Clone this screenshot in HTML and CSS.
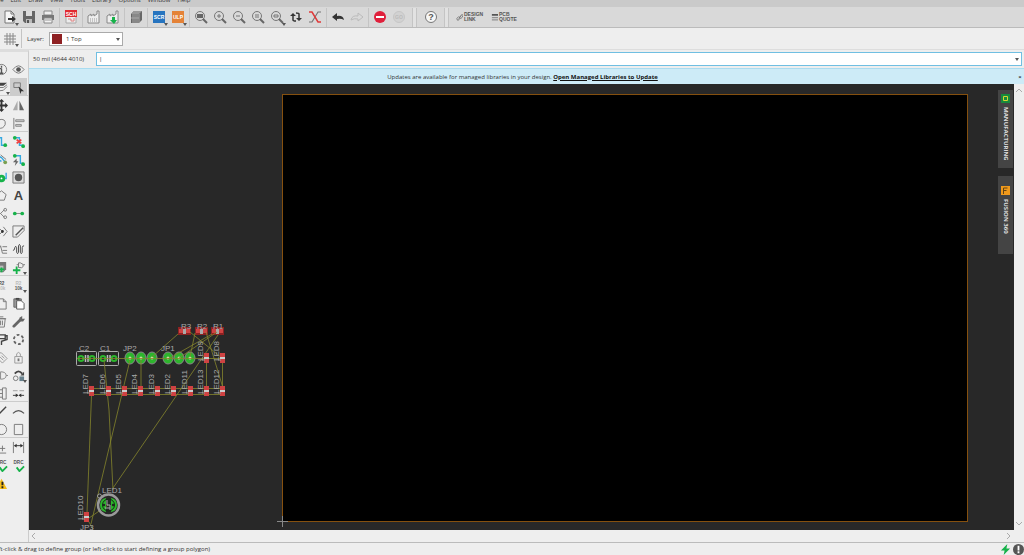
FILE: index.html
```html
<!DOCTYPE html>
<html lang="en">
<head>
    <meta charset="UTF-8">
    <meta name="viewport" content="width=device-width, initial-scale=1.0">
    <title>Board Editor</title>
    <link rel="stylesheet" href="styles.css">
</head>
<body>
    <nav class="menubar">
        <a href="#">File</a>
        <a href="#">Edit</a>
        <a href="#">Draw</a>
        <a href="#">View</a>
        <a href="#">Tools</a>
        <a href="#">Library</a>
        <a href="#">Options</a>
        <a href="#">Window</a>
        <a href="#">Help</a>
    </nav>

    <div class="toolbar">
        <button class="tool more" aria-label="New"><svg viewBox="0 0 14 14"><path d="M2 1h6l3 3v9H2z" fill="#f6f6f6" stroke="#777"/><path d="M8 1v3h3" fill="none" stroke="#777"/><path d="M5 8h4V6l4 3-4 3v-2H5z" fill="#333"/></svg></button>
        <button class="tool" aria-label="Save"><svg viewBox="0 0 14 14"><path d="M1 1h12v12H3l-2-2z" fill="#666"/><path d="M4 1h6v5H4z" fill="#ddd"/><path d="M4 9h6v4H4z" fill="#bbb"/><path d="M5 10h2v3H5z" fill="#555"/></svg></button>
        <button class="tool" aria-label="Print"><svg viewBox="0 0 14 14"><path d="M3 1h8v4H3z" fill="#eee" stroke="#888"/><path d="M1 5h12v5H1z" fill="#777"/><path d="M3 8h8v5H3z" fill="#f2f2f2" stroke="#888"/><path d="M4 10h6" stroke="#999"/></svg></button>
        <span class="sep"></span>
        <button class="tool" aria-label="Schematic"><svg viewBox="0 0 14 14"><path d="M2 6h10v7H2z" fill="#ececec" stroke="#aaa"/><path d="M4 9h3v2h3V8" fill="none" stroke="#e08080"/><path d="M1 0h12v7H1z" fill="#e02a30"/><text x="7" y="6" class="tag">SCH</text></svg></button>
        <span class="sep"></span>
        <button class="tool" aria-label="Fabrication"><svg viewBox="0 0 14 14"><path d="M1 13V6l3-2v2l3-2v2l3-2V1h2v12z" fill="#eee" stroke="#888"/><path d="M3 9h8M3 11h8" stroke="#999" stroke-dasharray="1 1"/></svg></button>
        <button class="tool" aria-label="Fabrication download"><svg viewBox="0 0 14 14"><path d="M1 13V6l3-2v2l3-2v2l3-2V1h2v12z" fill="#eee" stroke="#888"/><path d="M6 7h3v3h2l-3 4-4-4h2z" fill="#17b24a"/></svg></button>
        <span class="sep"></span>
        <button class="tool" aria-label="Library manager"><svg viewBox="0 0 14 14"><path d="M2 4l3-3h8v9l-3 3H2z" fill="#666"/><path d="M2 4l3-3h8l-3 3z" fill="#999"/><path d="M10 4v9M4 4v9M6 4v9M8 4v9M2 8h8" stroke="#aaa"/></svg></button>
        <span class="sep"></span>
        <button class="tool more" aria-label="Run script"><svg viewBox="0 0 14 14"><path d="M1 1h12v12H1z" fill="#2674bf"/><text x="7" y="9" class="tag">SCR</text></svg></button>
        <button class="tool more" aria-label="Run ULP"><svg viewBox="0 0 14 14"><path d="M1 1h12v12H1z" fill="#e48237"/><text x="7" y="9" class="tag">ULP</text></svg></button>
        <span class="sep"></span>
        <button class="tool" aria-label="Zoom to fit"><svg viewBox="0 0 14 14"><circle cx="6" cy="6" r="4.500" class="line"/><path d="M9 9l4 4" class="thick"/><path d="M3 4h6v4H3z" fill="#666"/></svg></button>
        <button class="tool" aria-label="Zoom in"><svg viewBox="0 0 14 14"><circle cx="6" cy="6" r="4.500" class="line"/><path d="M9 9l4 4" class="thick"/><path d="M4 6h4M6 4v4" class="line"/></svg></button>
        <button class="tool" aria-label="Zoom out"><svg viewBox="0 0 14 14"><circle cx="6" cy="6" r="4.500" class="line"/><path d="M9 9l4 4" class="thick"/><path d="M4 6h4" class="line"/></svg></button>
        <button class="tool" aria-label="Redraw"><svg viewBox="0 0 14 14"><circle cx="6" cy="6" r="4.500" class="line"/><path d="M9 9l4 4" class="thick"/><path d="M4 5h4M4 7h4" class="line"/></svg></button>
        <button class="tool more" aria-label="Zoom select"><svg viewBox="0 0 14 14"><circle cx="6" cy="6" r="4.500" class="line"/><path d="M9 9l4 4" class="thick"/><path d="M4 5h4v2H4z" class="line"/></svg></button>
        <button class="tool" aria-label="Refresh"><svg viewBox="0 0 14 14"><path d="M4 5v5q0 1 3 1M10 9V4q0-1-3-1" stroke="#333" stroke-width="1.500" fill="none"/><path d="M1 6l3-3 3 3zM7 8h6l-3 3z" fill="#333"/></svg></button>
        <button class="tool" aria-label="Ratsnest"><svg viewBox="0 0 14 14"><path d="M13 2h-3L4 12H1" fill="none" stroke="#777" stroke-width="1.200"/><path d="M1 2h3l6 10h3" fill="none" stroke="#e03a3a" stroke-width="1.500"/></svg></button>
        <span class="sep"></span>
        <button class="tool" aria-label="Undo"><svg viewBox="0 0 14 14"><path d="M1 7l5-4v3q6-1 7 4-3-2-7-1v2z" fill="#333"/></svg></button>
        <button class="tool" aria-label="Redo"><svg viewBox="0 0 14 14"><path d="M13 7L8 3v3q-6-1-7 4 3-2 7-1v2z" fill="none" stroke="#bbb"/></svg></button>
        <span class="sep"></span>
        <button class="tool" aria-label="Stop"><svg viewBox="0 0 14 14"><circle cx="7" cy="7" r="6" fill="#e0203c"/><path d="M3 6h8v2H3z" fill="#fff"/></svg></button>
        <button class="tool" aria-label="Go"><svg viewBox="0 0 14 14"><circle cx="7" cy="7" r="5.500" fill="#d2d2d2" stroke="#c6c6c6"/><text x="7" y="9" class="tag dim">GO</text></svg></button>
        <span class="sep double"></span>
        <button class="tool" aria-label="Help"><svg viewBox="0 0 14 14"><circle cx="7" cy="7" r="5.500" fill="#f6f6f6" stroke="#777"/><text x="7" y="10" class="question">?</text></svg></button>
        <span class="sep double"></span>
        <button class="wide-tool"><svg viewBox="0 0 8 8"><path d="M3 5l3-3M1 5l2-2q2 0 1 2L3 7q-2 1-2-2M5 3l1-2q2-1 2 1L6 5Q4 5 4 4" fill="none" stroke="#777"/></svg><span>DESIGN<br>LINK</span></button>
        <button class="wide-tool"><svg viewBox="0 0 8 8"><path d="M1 0h7v2H1z" fill="#555"/><path d="M1 4h7M1 6h7M1 8h7" stroke="#888"/></svg><span>PCB<br>QUOTE</span></button>
    </div>

    <div class="parameters">
        <button class="tool more" aria-label="Grid"><svg viewBox="0 0 14 14"><path d="M4 1v12M7 1v12M10 1v12M1 4h12M1 7h12M1 10h12" stroke="#888"/></svg></button>
        <span class="sep"></span>
        <label for="layer">Layer:</label>
        <div class="layer-box">
            <span class="swatch"></span>
            <select id="layer">
                <option>1 Top</option>
                <option>16 Bottom</option>
            </select>
            <span class="caret"></span>
        </div>
    </div>

    <div class="workspace">
        <aside class="palette">
            <div class="group">
                <button aria-label="Info"><svg viewBox="0 0 14 14"><circle cx="7" cy="7" r="5.500" class="line"/><path d="M7 6v5M7 3v2M5 11h4M5 6h2" stroke="#555" stroke-width="1.500"/></svg></button>
                <button aria-label="Show"><svg viewBox="0 0 14 14"><path d="M1 7q6-8 12 0-6 8-12 0z" class="line"/><circle cx="7" cy="7" r="2.500" fill="#555"/></svg></button>
                <button class="more" aria-label="Layers"><svg viewBox="0 0 14 14"><path d="M1 5l4-3h8L9 5z" fill="#444"/><path d="M1 8l4-1h4l4-3M1 11l8-1 4-4" class="line"/></svg></button>
                <button class="active" aria-label="Group"><svg viewBox="0 0 14 14"><path d="M2 2h7v5H2z" class="line"/><path d="M7 6l6 5-3 0-1 3z" fill="#333"/></svg></button>
            </div>
            <div class="group">
                <button aria-label="Move"><svg viewBox="0 0 14 14"><path d="M7 2v10M2 7h10" stroke="#333" stroke-width="2"/><path d="M7 0l3 3H4zM7 14l3-3H4zM0 7l3-3v6zM14 7l-3-3v6z" fill="#333"/></svg></button>
                <button aria-label="Mirror"><svg viewBox="0 0 14 14"><path d="M6 2v10H1z" fill="#aaa"/><path d="M8 2v10h5z" fill="#666"/></svg></button>
                <button aria-label="Rotate"><svg viewBox="0 0 14 14"><path d="M4 3q8-2 7 5-2 5-7 4M5 1L2 3l3 3" class="line"/></svg></button>
                <button aria-label="Align"><svg viewBox="0 0 14 14"><path d="M2 1v12" class="line"/><path d="M4 3h9v2H4zM4 8h6v2H4z" fill="#ccc" stroke="#888"/></svg></button>
            </div>
            <div class="group">
                <button aria-label="Route"><svg viewBox="0 0 14 14"><path d="M2 3h5v8h4" class="wire"/><circle cx="11" cy="11" r="2" class="pin"/></svg></button>
                <button aria-label="Ripup"><svg viewBox="0 0 14 14"><path d="M3 3h5v8h4" class="wire"/><path d="M5 5l5 4M10 5L5 9" stroke="#ee4040" stroke-width="2"/><circle cx="3" cy="3" r="2" class="pin"/><circle cx="12" cy="12" r="2" class="pin"/></svg></button>
                <button aria-label="Route multiple"><svg viewBox="0 0 14 14"><path d="M1 2l6 3 5 6M1 6l6 3" class="wire"/><circle cx="11" cy="10" r="2" fill="#7aa050"/><path d="M6 2l6 5" class="line"/></svg></button>
                <button aria-label="Autoroute"><svg viewBox="0 0 14 14"><path d="M3 3h6v8h3" class="wire"/><path d="M5 6L1 10h3l-1 4 4-5H5z" fill="#666"/><circle cx="3" cy="3" r="2" class="pin"/><circle cx="12" cy="12" r="2" class="pin"/></svg></button>
                <button aria-label="Via"><svg viewBox="0 0 14 14"><path d="M12 2v6H8" class="wire"/><circle cx="7" cy="8" r="4" class="pin"/><circle cx="7" cy="8" r="1" fill="#fff"/></svg></button>
                <button aria-label="Hole"><svg viewBox="0 0 14 14"><path d="M1 1h12v12H1z" fill="#ddd" stroke="#777"/><circle cx="7" cy="7" r="4" fill="#555"/></svg></button>
                <button aria-label="Polygon"><svg viewBox="0 0 14 14"><path d="M7 2l5 4-2 6H4L2 6z" class="line"/></svg></button>
                <button aria-label="Text"><svg viewBox="0 0 14 14"><text x="7" y="12" class="letter">A</text></svg></button>
                <button aria-label="Split"><svg viewBox="0 0 14 14"><path d="M2 7h4l4-4M6 7l4 4" class="line"/><circle cx="11" cy="3" r="1.500" class="line"/><circle cx="11" cy="11" r="1.500" class="line"/></svg></button>
                <button aria-label="Signal"><svg viewBox="0 0 14 14"><path d="M3 7h8" stroke="#888"/><circle cx="3" cy="7" r="2" class="pin"/><circle cx="11" cy="7" r="2" class="pin"/></svg></button>
                <button aria-label="Optimize"><svg viewBox="0 0 14 14"><path d="M3 2l5 5-5 5M9 2l4 5-4 5" class="line"/><circle cx="8" cy="7" r="1.500" fill="#333"/></svg></button>
                <button aria-label="Miter"><svg viewBox="0 0 14 14"><path d="M13 1H1v12h5l7-7z" class="line"/><path d="M12 3l-8 8" stroke="#555" stroke-width="1.500"/></svg></button>
                <button aria-label="Slice"><svg viewBox="0 0 14 14"><path d="M2 11l4-8 2 8M8 4h5M8 8h5M8 11h5" class="line"/></svg></button>
                <button aria-label="Meander"><svg viewBox="0 0 14 14"><path d="M1 8q2 0 2-3 1-3 2 0v5q1 3 2 0V3q1-3 2 0v7q1 3 2 0V5q0-2 2-2" class="line dark"/></svg></button>
            </div>
            <div class="group">
                <button aria-label="Add part"><svg viewBox="0 0 14 14"><path d="M2 4l3-3h7v8l-3 3H2z" fill="#777"/><path d="M3 5h6v6H3z" fill="#bbb"/><path d="M5 9h5M7 7v5" stroke="#17b24a" stroke-width="2"/></svg></button>
                <button class="more" aria-label="Add device"><svg viewBox="0 0 14 14"><path d="M7 2h2q4 1 3 4-1 2-5 1zM5 4h2M12 4h2" class="line"/><path d="M1 10h8M5 6v8" stroke="#17b24a" stroke-width="2"/></svg></button>
            </div>
            <div class="group">
                <button aria-label="Name"><svg viewBox="0 0 14 14"><text x="7" y="6" class="label">R2</text><text x="7" y="12" class="label dim">10k</text></svg></button>
                <button class="more" aria-label="Value"><svg viewBox="0 0 14 14"><text x="7" y="6" class="label dim">R2</text><text x="7" y="12" class="label">10k</text></svg></button>
                <button aria-label="Copy"><svg viewBox="0 0 14 14"><path d="M3 2h6l3 3v8H3zM9 2v3h3" class="line"/></svg></button>
                <button aria-label="Paste"><svg viewBox="0 0 14 14"><path d="M2 2h8v9H2z" fill="#999" stroke="#666"/><path d="M5 4h5l3 3v6H5z" fill="#fff" stroke="#555"/><path d="M4 1h4v2H4z" fill="#444"/></svg></button>
                <button aria-label="Delete"><svg viewBox="0 0 14 14"><path d="M3 4h8l-1 9H4zM2 4h10M5 2h4M6 6v5M8 6v5" class="line"/></svg></button>
                <button aria-label="Change"><svg viewBox="0 0 14 14"><path d="M2 12l7-7" stroke="#666" stroke-width="3" stroke-linecap="round"/><path d="M8 6V3l3-2v3h3l-2 3H9z" fill="#666"/></svg></button>
                <button aria-label="Paint"><svg viewBox="0 0 14 14"><path d="M3 2h8v4H3zM11 3h2v4L7 9v4" stroke="#444" fill="none" stroke-width="1.500"/></svg></button>
                <button aria-label="Smash"><svg viewBox="0 0 14 14"><circle cx="7" cy="7" r="5" fill="none" stroke="#666" stroke-width="2" stroke-dasharray="3 2.240"/></svg></button>
                <button aria-label="Tag"><svg viewBox="0 0 14 14"><path d="M2 2h5l6 6-5 5-6-6zM5 6l4 4M7 5l3 3" fill="none" stroke="#999"/></svg></button>
                <button aria-label="Lock"><svg viewBox="0 0 14 14"><path d="M3 6h8v7H3zM5 6V3q2-3 4 0v3" fill="none" stroke="#999"/><path d="M7 8v3" stroke="#777" stroke-width="2"/></svg></button>
                <button aria-label="Replace gate"><svg viewBox="0 0 14 14"><path d="M6 3q6 0 6 4t-6 4zM1 5h5M1 9h5M12 7h2" fill="none" stroke="#888"/></svg></button>
                <button class="more" aria-label="Replace"><svg viewBox="0 0 14 14"><path d="M3 5q4-5 8 0" fill="none" stroke="#444" stroke-width="2"/><path d="M13 3v4H9z" fill="#444"/><circle cx="4" cy="10" r="2.500" class="line"/><path d="M8 8h5v5H8z" fill="#67808c"/></svg></button>
                <button aria-label="Pin swap"><svg viewBox="0 0 14 14"><path d="M8 1h4v12H8zM5 3h3M5 7h3M5 11h3" class="line"/></svg></button>
                <button aria-label="Gap"><svg viewBox="0 0 14 14"><path d="M1 4h5M8 4h5" stroke="#999"/><path d="M1 9h5M8 9h5" stroke="#333"/><path d="M4 7l3 2-3 2zM10 7L7 9l3 2z" fill="#333"/></svg></button>
            </div>
            <div class="group">
                <button aria-label="Line"><svg viewBox="0 0 14 14"><path d="M2 12L12 2" stroke="#444" stroke-width="1.500"/></svg></button>
                <button aria-label="Arc"><svg viewBox="0 0 14 14"><path d="M1 9q6-6 12 0" stroke="#555" fill="none" stroke-width="1.200"/></svg></button>
                <button aria-label="Circle"><svg viewBox="0 0 14 14"><circle cx="7" cy="7" r="5.500" class="line"/></svg></button>
                <button aria-label="Rectangle"><svg viewBox="0 0 14 14"><path d="M2.500 1.500h9v11h-9z" class="line"/></svg></button>
            </div>
            <div class="group">
                <button aria-label="Mark"><svg viewBox="0 0 14 14"><path d="M5 8h6M8 5v6M2 13h10" class="line"/></svg></button>
                <button aria-label="Dimension"><svg viewBox="0 0 14 14"><path d="M1.500 1v12M12.500 1v12" stroke="#777"/><path d="M3 5h8" stroke="#333"/><path d="M2 5l3-2v4zM12 5L9 3v4z" fill="#333"/></svg></button>
                <button aria-label="ERC"><svg viewBox="0 0 14 14"><text x="7" y="5" class="label">ERC</text><path d="M5 9l3 4 5-5" class="check"/></svg></button>
                <button aria-label="DRC"><svg viewBox="0 0 14 14"><text x="7" y="5" class="label">DRC</text><path d="M5 9l3 4 5-5" class="check"/></svg></button>
                <button aria-label="Errors"><svg viewBox="0 0 14 14"><path d="M7 2l6 11H1z" fill="#f6bd18"/><path d="M8 5v4M8 10v2" stroke="#222" stroke-width="2"/></svg></button>
            </div>
        </aside>

        <main class="editor">
            <div class="command-row">
                <label for="command">50 mil (4644 4010)</label>
                <div class="command-box">
                    <input type="text" id="command" value="|">
                    <span class="caret"></span>
                </div>
            </div>

            <div class="notice">
                <p>Updates are available for managed libraries in your design. <a href="#">Open Managed Libraries to Update</a></p>
                <button aria-label="Close">×</button>
            </div>

            <div class="view">
                <div class="canvas">
                    <svg class="board" viewBox="29 84 985 446" preserveAspectRatio="xMinYMin meet">
                        <rect x="282.500" y="94.500" width="685" height="427" class="outline"/>
                        <path d="M282.500 516v11M277 521.500h11" stroke="#888"/>

                        <g class="parts">
                            <!-- resistors -->
                            <g id="resistors"></g>
                            <!-- capacitors -->
                            <g class="silk">
                                <rect x="76.500" y="351.500" width="20" height="14" rx="1"/>
                                <rect x="98.500" y="351.500" width="20" height="14" rx="1"/>
                            </g>
                            <g class="ring">
                                <circle cx="81" cy="358.500" r="2.500"/>
                                <circle cx="92" cy="358.500" r="2.500"/>
                                <circle cx="103" cy="358.500" r="2.500"/>
                                <circle cx="114" cy="358.500" r="2.500"/>
                            </g>
                            <path d="M85.500 355v7M88 355v7M107.500 355v7M110 355v7" stroke="#bbb" stroke-width="1.500"/>
                            <!-- headers -->
                            <g id="headers"></g>
                        </g>

                        <g class="airwires">
                            <path d="M77 358.500H222M91 388.500H222M91 394.500H222"/>
                            <path d="M206.500 358v32M222.500 358v32M141 360v30"/>
                            <path d="M178 334l-26 23M212 334l-44 25M217 332l-38 26M190 332l32 26M206 332l17 56M195 333l-5 24"/>
                            <path d="M218 335L113 488M130 360L91 524M104 360l5 50 4 80M91.500 395L87 513M108 505l-19 13M86 517l7 12"/>
                        </g>

                        <g class="parts">
                            <!-- leds -->
                            <g id="leds"></g>
                            <circle cx="108.500" cy="505" r="10.500" fill="none" stroke="#999" stroke-width="2.500"/>
                            <circle cx="99.500" cy="496" r="2" fill="none" stroke="#999"/>
                            <path d="M106 498q-6 1-6 7t6 7zM111 498q6 1 6 7t-6 7z" fill="#2db52d"/>
                            <circle cx="108.500" cy="505" r="6" fill="none" stroke="#172817"/>
                            <circle cx="104" cy="505" r="1.200" fill="#222"/>
                            <circle cx="113" cy="505" r="1.200" fill="#222"/>
                            <path d="M107 500v5h3v5M105 508h5" fill="none" stroke="#aaa"/>
                        </g>

                        <g class="names" id="names">
                            <text x="181" y="329">R3</text>
                            <text x="197" y="329">R2</text>
                            <text x="213" y="329">R1</text>
                            <text x="79" y="351">C2</text>
                            <text x="100" y="351">C1</text>
                            <text x="123" y="351">JP2</text>
                            <text x="161" y="351">JP1</text>
                            <text x="102" y="493">LED1</text>
                            <text x="80" y="530">JP3</text>
                        </g>
                    </svg>

                    <div class="side-tabs">
                        <button><svg viewBox="0 0 9 9"><rect width="9" height="9" fill="#178a3c"/><path d="M2.500 2.500h4v4h-4z" fill="none" stroke="#d6d832"/></svg>MANUFACTURING</button>
                        <button><svg viewBox="0 0 9 9"><rect width="9" height="9" fill="#f09a1c"/><path d="M2.500 8V2h4M2.500 4.500h3" fill="none" stroke="#664410"/></svg>FUSION 360</button>
                    </div>
                </div>
                <div class="scroll vertical"><button aria-label="Up"><svg viewBox="0 0 8 8"><path d="M1 6l3-3 3 3"/></svg></button><button aria-label="Down"><svg viewBox="0 0 8 8"><path d="M1 2l3 3 3-3"/></svg></button></div>
            </div>
            <div class="scroll horizontal"><button aria-label="Left"><svg viewBox="0 0 8 8"><path d="M5 1L2 4l3 3"/></svg></button><button aria-label="Right"><svg viewBox="0 0 8 8"><path d="M3 1l3 3-3 3"/></svg></button></div>
        </main>
    </div>

    <footer class="status">
        <p>Left-click &amp; drag to define group (or left-click to start defining a group polygon)</p>
        <svg viewBox="0 0 12 12"><path d="M8 0L1 7h4l-1 5 7-7H7z" fill="#17b24a"/></svg>
        <svg viewBox="0 0 12 12"><circle cx="6" cy="6" r="6" fill="#555"/><path d="M6 2v5M6 8v2" stroke="#fff" stroke-width="2"/></svg>
    </footer>

    <script src="board.js"></script>
</body>
</html>
```
FILE: styles.css
```css
* {
    margin: 0;
    padding: 0;
    box-sizing: border-box;
}

body {
    display: flex;
    flex-direction: column;
    height: 100vh;
    overflow: hidden;
    font-family: 'Open Sans', 'Noto Sans', sans-serif;
    font-size: 6px;
    line-height: 10px;
    color: #333;
    background: #eee;
}

button {
    border: none;
    background: none;
    font: inherit;
    color: inherit;
}

svg {
    display: block;
}

.line {
    fill: none;
    stroke: #777;
}

.dark {
    stroke: #444;
}

.thick {
    stroke: #666;
    stroke-width: 2;
}

.wire {
    fill: none;
    stroke: #35a8e0;
    stroke-width: 1.5;
}

.pin {
    fill: #17b24a;
}

.check {
    fill: none;
    stroke: #17b24a;
    stroke-width: 2;
}

.tag,
.label {
    font: bold 5px 'Liberation Sans', sans-serif;
    fill: #fff;
    text-anchor: middle;
}

.label {
    fill: #555;
}

.dim {
    fill: #bbb;
}

.question,
.letter {
    font: bold 9px 'Liberation Sans', sans-serif;
    fill: #555;
    text-anchor: middle;
}

.letter {
    font-size: 14px;
    fill: #444;
}

/* Menu and tool bars */
.menubar {
    display: flex;
    align-items: flex-end;
    gap: 7px;
    height: 7px;
    margin-left: -6px;
    padding-bottom: 2px;
    overflow: hidden;
    background: #cacaca;
    flex: none;
}

.menubar a {
    color: #333;
    text-decoration: none;
}

.toolbar {
    display: flex;
    align-items: center;
    height: 21px;
    background: #d9d9d9;
    border-bottom: 1px solid #bbb;
    flex: none;
}

.tool {
    position: relative;
    width: 19px;
    height: 19px;
    flex: none;
}

.tool svg {
    width: 14px;
    height: 14px;
    margin: 0 auto;
}

.more {
    position: relative;
}

.more::after {
    content: "";
    position: absolute;
    right: 0;
    bottom: 1px;
    border: 2px solid transparent;
    border-top: 3px solid #555;
    border-bottom: none;
}

.sep {
    width: 1px;
    height: 19px;
    margin: 0 1px 0 2px;
    background: #c4c4c4;
    flex: none;
}

.sep.double {
    width: 5px;
    margin: 0 4px;
    border: 1px solid #c4c4c4;
    border-width: 0 1px;
    background: #e2e2e2;
}

.wide-tool {
    display: flex;
    align-items: center;
    gap: 1px;
    width: 35px;
    padding-left: 3px;
    color: #555;
    font: bold 5px/5px 'Liberation Sans', sans-serif;
    text-align: left;
}

.wide-tool svg {
    width: 7px;
    height: 7px;
    flex: none;
}

.parameters {
    display: flex;
    align-items: center;
    height: 22px;
    border-bottom: 1px solid #ddd;
    flex: none;
}

.parameters label {
    width: 26px;
    padding-left: 4px;
}

.layer-box {
    position: relative;
    width: 74px;
    height: 14px;
}

.layer-box select {
    width: 100%;
    height: 100%;
    padding-left: 16px;
    border: 1px solid #aaa;
    background: #fff;
    appearance: none;
    font: inherit;
    color: #333;
}

.swatch {
    position: absolute;
    top: 2px;
    left: 3px;
    width: 10px;
    height: 10px;
    background: #8e2022;
}

.caret {
    position: absolute;
    top: 6px;
    right: 3px;
    border: 2px solid transparent;
    border-top: 3px solid #555;
    border-bottom: none;
}

/* Tool palette */
.workspace {
    display: flex;
    flex: 1;
    min-height: 0;
}

.palette {
    width: 29px;
    padding-top: 8px;
    overflow: hidden;
    border-top: 2px solid #ddd;
    border-right: 1px solid #ccc;
    flex: none;
}

.group {
    display: grid;
    grid-template-columns: 17px 17px;
    grid-auto-rows: 18px;
    margin-left: -7px;
}

.group + .group {
    box-shadow: 0 -1px #ccc;
}

.group svg {
    width: 13px;
    height: 13px;
    margin: 0 auto;
}

.active {
    background: #ccc;
}

/* Editor */
.editor {
    display: flex;
    flex-direction: column;
    flex: 1;
    min-width: 0;
}

.command-row {
    display: flex;
    align-items: center;
    height: 18px;
    padding: 0 2px 0 4px;
    flex: none;
}

.command-row label {
    width: 63px;
}

.command-box {
    position: relative;
    flex: 1;
}

.command-box input {
    display: block;
    width: 100%;
    height: 14px;
    padding: 0 2px;
    border: 1px solid #70bfe2;
    background: #fff;
    font: inherit;
    color: #222;
}

.notice {
    display: flex;
    align-items: center;
    height: 16px;
    background: #cdebf7;
    border-top: 1px solid #aadcf0;
    flex: none;
}

.notice p {
    flex: 1;
    text-align: center;
}

.notice a {
    color: #111;
    font-weight: bold;
}

.notice button {
    width: 8px;
    font-weight: bold;
}

.view {
    display: flex;
    flex: 1;
    min-height: 0;
}

.canvas {
    position: relative;
    flex: 1;
    min-width: 0;
    overflow: hidden;
    background: #282828;
}

.board {
    width: 100%;
    height: 100%;
}

.outline {
    fill: #000;
    stroke: #85500f;
}

.silk {
    fill: none;
    stroke: #aaa;
}

.ring {
    fill: none;
    stroke: #2db52d;
    stroke-width: 2;
}

.airwires {
    fill: none;
    stroke: #85852c;
    stroke-width: 0.8;
}

.names {
    font: 8px 'Liberation Sans', sans-serif;
    fill: #aaa;
}

.side-tabs {
    position: absolute;
    top: 6px;
    right: 1px;
    display: flex;
    flex-direction: column;
    gap: 8px;
}

.side-tabs button {
    display: flex;
    align-items: center;
    gap: 4px;
    width: 15px;
    height: 78px;
    padding-top: 4px;
    background: #444;
    color: #ddd;
    font-weight: bold;
    writing-mode: vertical-rl;
}

.side-tabs button + button {
    padding-top: 10px;
}

.side-tabs svg {
    width: 9px;
    height: 9px;
}

.scroll {
    display: flex;
    justify-content: space-between;
    background: #eee;
    flex: none;
}

.scroll svg {
    width: 8px;
    height: 8px;
    fill: none;
    stroke: #aaa;
}

.vertical {
    flex-direction: column;
    width: 10px;
    padding: 2px 1px;
}

.horizontal {
    align-items: center;
    height: 12px;
    padding: 0 12px 0 1px;
}

/* Status bar */
.status {
    display: flex;
    align-items: center;
    gap: 2px;
    height: 13px;
    margin-left: -8px;
    border-top: 1px solid #bbb;
    flex: none;
}

.status p {
    flex: 1;
}

.status svg {
    width: 11px;
    height: 11px;
}
```
FILE: board.js
```javascript
const SVG_NS = 'http://www.w3.org/2000/svg';

function add(parentId, tag, attrs, text) {
    const el = document.createElementNS(SVG_NS, tag);
    Object.entries(attrs).forEach(([key, value]) => el.setAttribute(key, value));
    if (text) el.textContent = text;
    document.getElementById(parentId).appendChild(el);
}

// LED name, x, y
const leds = [
    ['LED7', 91, 391], ['LED6', 108, 391], ['LED5', 124, 391],
    ['LED4', 140, 391], ['LED3', 157, 391], ['LED2', 173, 391],
    ['LED11', 190, 391], ['LED13', 206, 391], ['LED12', 222, 391],
    ['LED9', 206, 358], ['LED8', 222, 358], ['LED10', 86, 517]
];

leds.forEach(([name, x, y]) => {
    add('leds', 'rect', { x: x - 2, y: y - 5, width: 5, height: 10, fill: '#cf4242' });
    add('leds', 'rect', { x: x - 2, y: y - 1, width: 5, height: 2, fill: '#ccc' });
    add('leds', 'path', { d: `M${x - 4} ${y + 2}h3`, stroke: '#999' });
    add('names', 'text', { transform: `translate(${x - 3} ${y + 3}) rotate(-90)` }, name);
});

[184, 201, 217].forEach(x => {
    add('resistors', 'rect', { x: x - 6, y: 327, width: 13, height: 8, fill: '#8c2222' });
    add('resistors', 'rect', { x: x - 5, y: 329, width: 11, height: 4, fill: '#cf4242' });
    add('resistors', 'rect', { x: x - 1, y: 329, width: 3, height: 5, fill: '#aaa' });
});

[130, 141, 152, 168, 179, 190].forEach(x => {
    add('headers', 'ellipse', { cx: x, cy: 358, rx: 5, ry: 6, fill: '#2db52d', stroke: '#888' });
    add('headers', 'circle', { cx: x, cy: 358, r: 1.5, fill: '#cdd8a0' });
});
```
